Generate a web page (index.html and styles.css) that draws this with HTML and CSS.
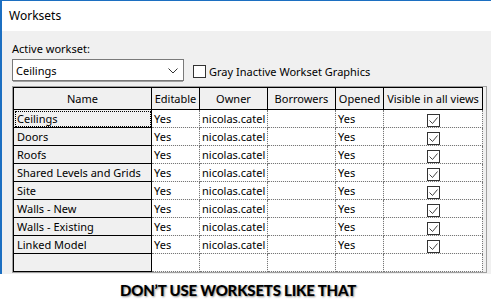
FILE: index.html
```html
<!DOCTYPE html>
<html lang="en">
<head>
    <meta charset="UTF-8">
    <title>Worksets</title>
    <link rel="stylesheet" href="styles.css">
</head>
<body>

    <div class="window">
        <div class="titlebar">Worksets</div>
        <div class="panel">
            <div class="label">Active workset:</div>
            <div class="toolbar">
                <div class="combo">
                    <span>Ceilings</span>
                    <svg class="chevron" width="10" height="6" viewBox="0 0 10 6"><path d="M0.5 0.5 L5 5 L9.5 0.5" fill="none" stroke="#333" stroke-width="1"/></svg>
                </div>
                <div class="check">
                    <span class="box"></span>
                    <span>Gray Inactive Workset Graphics</span>
                </div>
            </div>

            <div class="grid">
                <table>
                    <colgroup>
                        <col class="c-name"><col class="c-edit"><col class="c-owner">
                        <col class="c-borrow"><col class="c-open"><col class="c-vis">
                    </colgroup>
                    <thead>
                        <tr>
                            <th>Name</th>
                            <th>Editable</th>
                            <th>Owner</th>
                            <th>Borrowers</th>
                            <th>Opened</th>
                            <th>Visible in all views</th>
                        </tr>
                    </thead>
                    <tbody id="rows"></tbody>
                </table>
            </div>
        </div>
    </div>

    <div class="caption">DON’T USE WORKSETS LIKE THAT</div>

    <script>
        var worksets = ["Ceilings", "Doors", "Roofs", "Shared Levels and Grids", "Site", "Walls - New", "Walls - Existing", "Linked Model"];
        var tick = '<span class="tick"><svg width="13" height="13" viewBox="0 0 13 13"><rect x="0.5" y="0.5" width="12" height="12" fill="#fff" stroke="#333"/><path d="M2.5 6.5 L5.5 9.5 L10.5 3.5" fill="none" stroke="#444" stroke-width="1"/></svg></span>';
        var tbody = document.getElementById("rows");

        worksets.forEach(function (name, i) {
            var row = tbody.insertRow();
            var head = document.createElement("th");
            head.innerHTML = name;
            if (i === 0) head.className = "focus";
            row.appendChild(head);
            row.insertCell(1).innerHTML = "Yes";
            row.insertCell(2).innerHTML = "nicolas.catel";
            row.insertCell(3).innerHTML = "";
            row.insertCell(4).innerHTML = "Yes";
            var vis = row.insertCell(5);
            vis.className = "center";
            vis.innerHTML = tick;
        });

        // empty new row at the bottom
        var last = tbody.insertRow();
        last.appendChild(document.createElement("th"));
        for (var c = 1; c < 6; c++) last.insertCell(c);
    </script>

</body>
</html>
```

FILE: styles.css
```css
body {
    margin: 0;
    background: #fff;
    font-family: "Noto Sans", "Liberation Sans", sans-serif;
    font-size: 11px;
    color: #000;
    width: 491px;
    height: 302px;
    overflow: hidden;
}
.window {
    border-top: 1px solid #1c6fc1;
    border-left: 2px solid #1c6fc1;
    height: 273px;
    display: flex;
    flex-direction: column;
}
.titlebar {
    height: 30px;
    line-height: 30px;
    padding-left: 7px;
    font-size: 12px;
    background: #fff;
}
.panel {
    flex: 1;
    background: #f0f0f0;
    padding: 8px 0 0 10px;
}
.label {
    height: 20px;
    line-height: 20px;
}
.toolbar {
    display: flex;
    align-items: center;
    gap: 9px;
    height: 22px;
}
.combo {
    width: 162px;
    height: 20px;
    background: #fff;
    border: 1px solid #7a7a7a;
    box-shadow: 0 2px 0 -1px #a0a0a0;
    display: flex;
    align-items: center;
    justify-content: space-between;
    padding: 0 5px 0 3px;
}
.chevron {
    margin-top: 1px;
}
.check {
    display: flex;
    align-items: center;
    gap: 3px;
    margin-top: 2px;
}
.box {
    width: 11px;
    height: 11px;
    border: 1px solid #333;
    background: #fff;
}
.grid {
    margin-top: 5px;
    width: 473px;
    height: 185px;
    border: 1px solid #a0a0a0;
}
table {
    border-collapse: collapse;
    table-layout: fixed;
    width: 469px;
}
.c-name { width: 138px; }
.c-edit { width: 48px; }
.c-owner { width: 68px; }
.c-borrow { width: 68px; }
.c-open { width: 48px; }
.c-vis { width: 99px; }
th, td {
    height: 17px;
    padding: 0 2px;
    white-space: nowrap;
    overflow: hidden;
    text-align: left;
    font-weight: normal;
    line-height: 17px;
}
thead th {
    height: 21px;
    text-align: center;
    background: #f0f0f0;
    border: 1px solid #000;
}
tbody th {
    background: #f0f0f0;
    border: 1px solid #000;
    border-top-color: #fff;
    padding-left: 3px;
}
tbody th.focus {
    outline: 1px dotted #000;
    outline-offset: -2px;
}
td {
    background: #fff;
    border: 1px dotted #777;
    text-overflow: clip;
}
td.center {
    text-align: center;
}
.tick {
    display: inline-block;
    vertical-align: middle;
    height: 13px;
    line-height: 0;
}
.caption {
    text-align: center;
    width: 476px;
    margin-top: 7px;
    font-family: Lato, "Open Sans", sans-serif;
    font-weight: 900;
    font-size: 15px;
    letter-spacing: -0.2px;
    color: #000;
    text-shadow: 1px 1px 2px rgba(0, 0, 0, 0.45);
}
```
